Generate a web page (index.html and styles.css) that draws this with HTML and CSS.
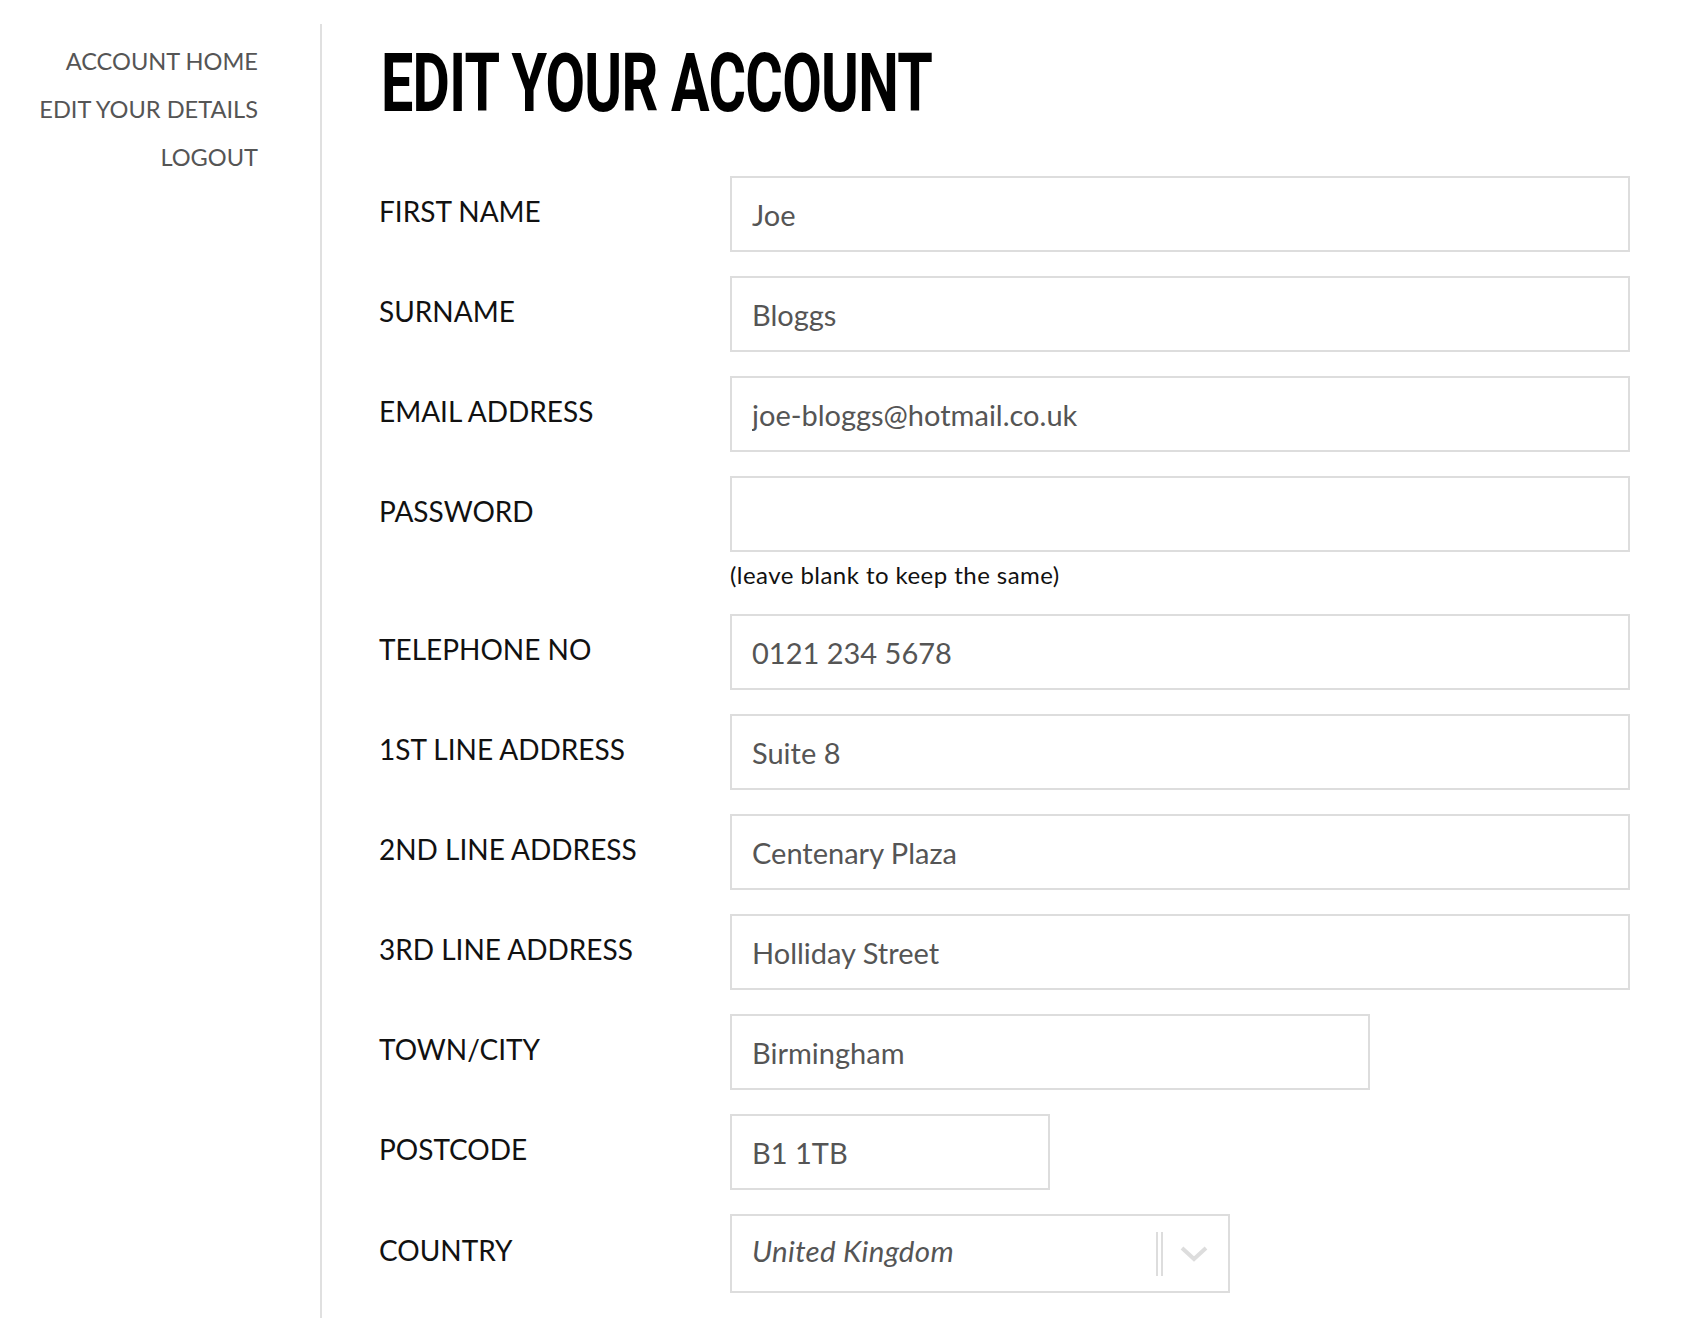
FILE: index.html
```html
<!DOCTYPE html>
<html lang="en">
<head>
<meta charset="utf-8">
<title>Edit your account</title>
<link rel="stylesheet" href="styles.css">
</head>
<body>
<div class="page">
  <aside class="sidebar">
    <nav class="account-nav">
      <a href="#" class="nav-link">ACCOUNT HOME</a>
      <a href="#" class="nav-link">EDIT YOUR DETAILS</a>
      <a href="#" class="nav-link">LOGOUT</a>
    </nav>
  </aside>
  <main class="content">
    <h1 class="title"><span class="title-text">EDIT YOUR ACCOUNT</span></h1>
    <form class="form">
      <div class="row">
        <label class="label">FIRST NAME</label>
        <div class="field"><input class="input" type="text" value="Joe"></div>
      </div>
      <div class="row">
        <label class="label">SURNAME</label>
        <div class="field"><input class="input" type="text" value="Bloggs"></div>
      </div>
      <div class="row">
        <label class="label">EMAIL ADDRESS</label>
        <div class="field"><input class="input" type="text" value="joe-bloggs@hotmail.co.uk"></div>
      </div>
      <div class="row">
        <label class="label">PASSWORD</label>
        <div class="field">
          <input class="input" type="password" value="">
          <p class="help">(leave blank to keep the same)</p>
        </div>
      </div>
      <div class="row">
        <label class="label">TELEPHONE NO</label>
        <div class="field"><input class="input" type="text" value="0121 234 5678"></div>
      </div>
      <div class="row">
        <label class="label">1ST LINE ADDRESS</label>
        <div class="field"><input class="input" type="text" value="Suite 8"></div>
      </div>
      <div class="row">
        <label class="label">2ND LINE ADDRESS</label>
        <div class="field"><input class="input" type="text" value="Centenary Plaza"></div>
      </div>
      <div class="row">
        <label class="label">3RD LINE ADDRESS</label>
        <div class="field"><input class="input" type="text" value="Holliday Street"></div>
      </div>
      <div class="row">
        <label class="label">TOWN/CITY</label>
        <div class="field"><input class="input input-town" type="text" value="Birmingham"></div>
      </div>
      <div class="row">
        <label class="label">POSTCODE</label>
        <div class="field"><input class="input input-postcode" type="text" value="B1 1TB"></div>
      </div>
      <div class="row">
        <label class="label label-select">COUNTRY</label>
        <div class="field">
          <div class="select">
            <span class="select-value">United Kingdom</span>
            <span class="select-sep"></span>
            <svg class="select-chevron" width="28" height="16" viewBox="0 0 28 16" aria-hidden="true">
              <path d="M2 2 L14 13 L26 2" fill="none" stroke="#dddddd" stroke-width="4"/>
            </svg>
          </div>
        </div>
      </div>
    </form>
  </main>
</div>
</body>
</html>
```

FILE: styles.css
```css
html, body {
  margin: 0;
  padding: 0;
  background: #ffffff;
}

body {
  font-family: Lato, "Noto Sans", sans-serif;
  color: #111111;
}

.page {
  display: flex;
  min-height: 100vh;
}

.sidebar {
  width: 320px;
  flex: none;
  box-sizing: border-box;
  padding: 37px 62px 0 0;
}

.account-nav {
  display: flex;
  flex-direction: column;
  align-items: flex-end;
}

.nav-link {
  font-size: 23.6px;
  line-height: 48px;
  color: #555555;
  text-decoration: none;
}

.content {
  flex: 1;
  margin-top: 24px;
  border-left: 2px solid #e0e0e0;
  padding: 18px 0 0 57px;
}

.title {
  margin: 0 0 52px 2px;
  font-family: Roboto, "Liberation Sans", sans-serif;
  font-weight: 700;
  font-size: 82px;
  line-height: 82px;
  color: #000000;
  white-space: nowrap;
}

.title-text {
  display: inline-block;
  transform: scaleX(0.70);
  transform-origin: left center;
  letter-spacing: -1px;
}

.form {
  display: flex;
  flex-direction: column;
  gap: 24px;
}

.row {
  display: grid;
  grid-template-columns: 351px 1fr;
  align-items: start;
}

.label {
  font-size: 28px;
  line-height: 34px;
  padding-top: 18px;
  color: #111111;
}

.label-select {
  padding-top: 19px;
}

.field {
  display: flex;
  flex-direction: column;
}

.input {
  box-sizing: border-box;
  width: 900px;
  height: 76px;
  margin: 0;
  border: 2px solid #dddddd;
  border-radius: 0;
  padding: 0 20px;
  font-family: Lato, "Noto Sans", sans-serif;
  font-size: 29px;
  color: #555555;
  background: #ffffff;
  outline: none;
}

.input-town {
  width: 640px;
}

.input-postcode {
  width: 320px;
}

.help {
  margin: 8px 0 0 0;
  font-size: 24px;
  line-height: 30px;
  letter-spacing: 0.45px;
  color: #111111;
}

.select {
  box-sizing: border-box;
  width: 500px;
  height: 79px;
  border: 2px solid #dddddd;
  padding: 0 20px;
  display: flex;
  align-items: center;
}

.select-value {
  flex: 1;
  margin-bottom: 7px;
  font-size: 29.5px;
  font-style: italic;
  letter-spacing: 0.3px;
  color: #555555;
}

.select-sep {
  box-sizing: border-box;
  width: 7px;
  height: 44px;
  border-left: 2px solid #dddddd;
  border-right: 2px solid #dddddd;
  margin-right: 17px;
}

.select-chevron {
  display: block;
}
```
